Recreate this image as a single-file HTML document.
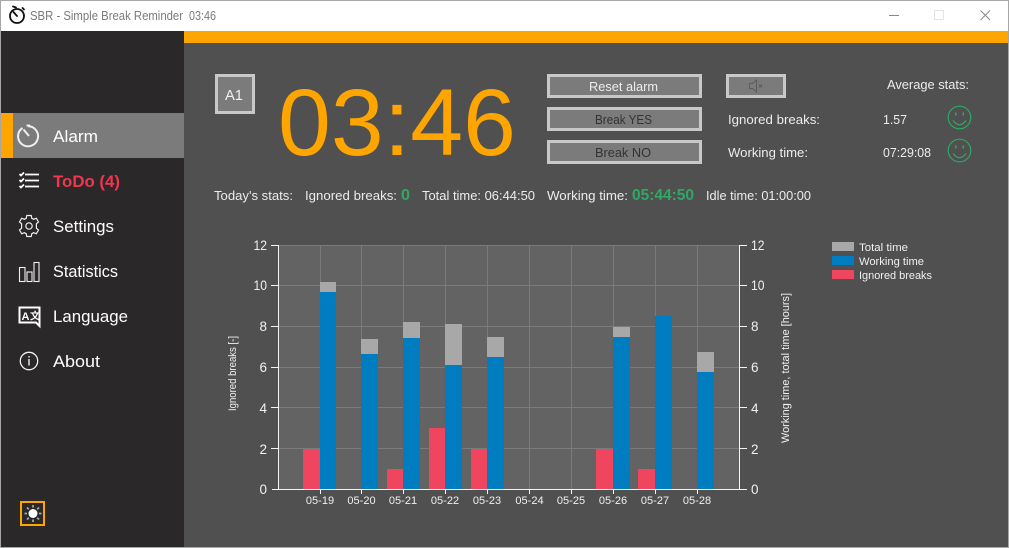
<!DOCTYPE html>
<html><head><meta charset="utf-8"><style>
html,body{margin:0;padding:0;background:#505050}
svg{display:block}
text{font-family:"Liberation Sans",sans-serif}
.n{font-size:17px;fill:#fff}
.s{font-size:13px;fill:#ececec}
.a{font-size:13.5px;fill:#f0f0f0}
.x{font-size:11px;fill:#f0f0f0}
.g{font-weight:bold;fill:#2fa866;font-size:16px}
</style></head><body>
<svg width="1009" height="548" viewBox="0 0 1009 548" xmlns="http://www.w3.org/2000/svg">
<rect width="1009" height="548" fill="#a6a6a6"/>
<rect x="1" y="1" width="1007" height="30" fill="#fff"/>
<rect x="1" y="31" width="183" height="516" fill="#2a2829"/>
<rect x="184" y="31" width="824" height="516" fill="#505050"/>
<rect x="184" y="31" width="824" height="12" fill="#ffa500"/>

<!-- title bar -->
<g fill="none" stroke="#111" stroke-width="1.8">
<circle cx="17" cy="16" r="7"/><path d="M13 6.5 L16 7.5M17 16 L13.5 12M22.5 8 L24 9.5" stroke-linecap="round"/>
</g>
<text x="30" y="20" font-size="12.5" fill="#7a7a7a" textLength="153" lengthAdjust="spacingAndGlyphs">SBR - Simple Break Reminder</text>
<text x="189" y="20" font-size="12.5" fill="#7a7a7a" textLength="27" lengthAdjust="spacingAndGlyphs">03:46</text>
<rect x="889" y="15" width="10" height="1" fill="#888"/>
<rect x="934.500" y="10.500" width="9" height="9" fill="none" stroke="#e4e4e4"/>
<path d="M980.500 10.500 L990 20M990 10.500 L980.500 20" stroke="#888" stroke-width="1"/>

<!-- sidebar -->
<rect x="1" y="113" width="183" height="45" fill="#7b7b7b"/>
<rect x="1" y="113" width="12" height="45" fill="#ffa500"/>
<g fill="none" stroke="#f0f0f0" stroke-width="2">
<path d="M22.500 128 A10 10 0 1 0 28 126.300"/><path d="M29 136 L23.500 129.500"/><path d="M26.500 125.500 L30 125.500" />
</g>
<g stroke="#fff" stroke-width="1.800" fill="none">
<path d="M25 174.500H39M25 180.500H39M25 186.500H39"/>
<path d="M19.500 174 L21 175.500 L24 172.500M19.500 180 L21 181.500 L24 178.500M19.500 186 L21 187.500 L24 184.500"/>
</g>
<g fill="none" stroke="#f0f0f0" stroke-width="1.200">
<circle cx="29" cy="226" r="3.200"/>
<path d="M26.800 215.500 L31.200 215.500 L31.800 218.300 L33.700 219.300 L36.300 218.200 L38.500 222 L36.400 223.800 L36.400 228.200 L38.500 230 L36.300 233.800 L33.700 232.700 L31.800 233.700 L31.200 236.500 L26.800 236.500 L26.200 233.700 L24.300 232.700 L21.700 233.800 L19.500 230 L21.600 228.200 L21.600 223.800 L19.500 222 L21.700 218.200 L24.300 219.300 L26.200 218.300 Z"/>
</g>
<g fill="none" stroke="#f0f0f0" stroke-width="1.100">
<rect x="19.500" y="267.500" width="5.500" height="14"/><rect x="27" y="272" width="5" height="9.500"/><rect x="34" y="262.500" width="5" height="19"/>
</g>
<path d="M19.500 307.500 H39.500 V326 L36 322.500 H19.500 Z" fill="none" stroke="#fff" stroke-width="2"/>
<text x="21.500" y="320" font-size="11" font-weight="bold" fill="#fff">A</text>
<text x="30" y="319.500" font-size="10" font-weight="bold" fill="#fff" style="font-family:'Liberation Sans','Noto Sans CJK SC',sans-serif">文</text>
<circle cx="29" cy="361" r="8.700" fill="none" stroke="#f0f0f0" stroke-width="1.300"/>
<rect x="28.300" y="359" width="1.400" height="6.500" fill="#f0f0f0"/><rect x="28.300" y="356" width="1.400" height="1.500" fill="#f0f0f0"/>

<text class="n" x="53" y="142" textLength="45" lengthAdjust="spacingAndGlyphs">Alarm</text>
<text x="53" y="187" font-size="17" font-weight="bold" fill="#f6344c" textLength="67" lengthAdjust="spacingAndGlyphs">ToDo (4)</text>
<text class="n" x="53" y="232" textLength="61" lengthAdjust="spacingAndGlyphs">Settings</text>
<text class="n" x="53" y="277" textLength="65" lengthAdjust="spacingAndGlyphs">Statistics</text>
<text class="n" x="53" y="322" textLength="75" lengthAdjust="spacingAndGlyphs">Language</text>
<text class="n" x="53" y="367" textLength="47" lengthAdjust="spacingAndGlyphs">About</text>

<rect x="21" y="502" width="23" height="23" fill="none" stroke="#ffa500" stroke-width="2"/>
<circle cx="33" cy="513.500" r="4.500" fill="#fff"/>
<path d="M33 505v2.500M33 519.500v2.500M24.500 513.500h2.500M39 513.500h2.500M27 507.500l1.800 1.800M37.200 517.700l1.800 1.800M39 507.500l-1.800 1.800M28.800 517.700l-1.800 1.800" stroke="#aaa" stroke-width="1.700"/>

<!-- A1 and time -->
<rect x="216.500" y="75.500" width="37" height="37" fill="#7b7b7b" stroke="#c8c8c8" stroke-width="3"/>
<text x="225" y="100" font-size="14.500" fill="#f0f0f0" textLength="18" lengthAdjust="spacingAndGlyphs">A1</text>
<text x="278" y="155" font-size="95" fill="#ffa500" textLength="238">03:46</text>

<!-- buttons -->
<g fill="#7b7b7b" stroke="#c8c8c8" stroke-width="3">
<rect x="548.500" y="75.500" width="152" height="21"/>
<rect x="548.500" y="108.500" width="152" height="21"/>
<rect x="548.500" y="141.500" width="152" height="21"/>
<rect x="727.500" y="75.500" width="57" height="21"/>
</g>
<text x="589" y="91" font-size="12.500" fill="#ededed" textLength="69" lengthAdjust="spacingAndGlyphs">Reset alarm</text>
<text x="595" y="124" font-size="12.500" fill="#333" textLength="57" lengthAdjust="spacingAndGlyphs">Break YES</text>
<text x="595" y="157" font-size="12.500" fill="#333" textLength="56" lengthAdjust="spacingAndGlyphs">Break NO</text>
<path d="M749.500 83.500h3l4-3.500v12l-4-3.500h-3zM759 84.500l3 3M762 84.500l-3 3" fill="none" stroke="#5c5c5c" stroke-width="1"/>

<!-- average stats -->
<text class="s" x="887" y="89" textLength="82" lengthAdjust="spacingAndGlyphs">Average stats:</text>
<text class="s" x="728" y="124" textLength="92" lengthAdjust="spacingAndGlyphs">Ignored breaks:</text>
<text class="s" x="883" y="124" textLength="24" lengthAdjust="spacingAndGlyphs">1.57</text>
<text class="s" x="728" y="157" textLength="80" lengthAdjust="spacingAndGlyphs">Working time:</text>
<text class="s" x="883" y="157" textLength="48" lengthAdjust="spacingAndGlyphs">07:29:08</text>
<g fill="none" stroke="#2fa866" stroke-width="1.200">
<circle cx="959.500" cy="117.500" r="11.300"/><path d="M953 120.500 Q959.500 129 966 120.500"/>
<circle cx="959.500" cy="150.500" r="11.300"/><path d="M953 153.500 Q959.500 162 966 153.500"/>
</g>
<g fill="#2fa866">
<rect x="955" y="112.500" width="1.500" height="3"/><rect x="962.500" y="112.500" width="1.500" height="3"/>
<rect x="955" y="145.500" width="1.500" height="3"/><rect x="962.500" y="145.500" width="1.500" height="3"/>
</g>

<!-- today -->
<text class="s" x="214" y="200" textLength="79" lengthAdjust="spacingAndGlyphs">Today's stats:</text>
<text class="s" x="305" y="200" textLength="92" lengthAdjust="spacingAndGlyphs">Ignored breaks:</text>
<text class="g" x="401" y="200" textLength="9" lengthAdjust="spacingAndGlyphs">0</text>
<text class="s" x="422" y="200" textLength="113" lengthAdjust="spacingAndGlyphs">Total time: 06:44:50</text>
<text class="s" x="547" y="200" textLength="81" lengthAdjust="spacingAndGlyphs">Working time:</text>
<text class="g" x="632" y="200" textLength="62" lengthAdjust="spacingAndGlyphs">05:44:50</text>
<text class="s" x="706" y="200" textLength="105" lengthAdjust="spacingAndGlyphs">Idle time: 01:00:00</text>

<!-- chart -->
<rect x="279" y="245" width="460" height="244" fill="#636363"/>
<g stroke="#7b7b7b" stroke-width="1">
<path d="M279 245.500H739M279 285.500H739M279 326.500H739M279 367.500H739M279 407.500H739M279 448.500H739"/>
<path d="M320.500 245V489M361.500 245V489M403.500 245V489M445.500 245V489M487.500 245V489M529.500 245V489M571.500 245V489M613.500 245V489M655.500 245V489M697.500 245V489"/>
</g>
<g fill="#a8a8a8">
<rect x="320" y="282" width="16" height="10"/>
<rect x="361" y="339" width="17" height="15"/>
<rect x="403" y="322" width="17" height="16"/>
<rect x="445" y="324" width="17" height="41"/>
<rect x="487" y="337" width="17" height="20"/>
<rect x="613" y="327" width="17" height="10"/>
<rect x="697" y="352" width="17" height="20"/>
</g>
<g fill="#007cc0">
<rect x="320" y="292" width="16" height="197"/>
<rect x="361" y="354" width="17" height="135"/>
<rect x="403" y="338" width="17" height="151"/>
<rect x="445" y="365" width="17" height="124"/>
<rect x="487" y="357" width="17" height="132"/>
<rect x="613" y="337" width="17" height="152"/>
<rect x="655" y="316" width="17" height="173"/>
<rect x="697" y="372" width="17" height="117"/>
</g>
<g fill="#f0455f">
<rect x="303" y="449" width="17" height="40"/>
<rect x="387" y="469" width="16" height="20"/>
<rect x="429" y="428" width="16" height="61"/>
<rect x="471" y="449" width="16" height="40"/>
<rect x="596" y="449" width="17" height="40"/>
<rect x="638" y="469" width="17" height="20"/>
</g>
<g stroke="#f4f4f4" stroke-width="1" fill="none">
<path d="M278.500 245V489.500M739.500 245V489.500M272 489.500H740"/>
<path d="M271 245.500h8M271 285.500h8M271 326.500h8M271 367.500h8M271 407.500h8M271 448.500h8"/>
<path d="M739 245.500h8M739 285.500h8M739 326.500h8M739 367.500h8M739 407.500h8M739 448.500h8M739 489.500h8"/>
<path d="M320.500 489v5M361.500 489v5M403.500 489v5M445.500 489v5M487.500 489v5M529.500 489v5M571.500 489v5M613.500 489v5M655.500 489v5M697.500 489v5"/>
</g>
<g text-anchor="end">
<text class="a" x="267" y="250" textLength="13.500" lengthAdjust="spacingAndGlyphs">12</text><text class="a" x="267" y="290" textLength="13.500" lengthAdjust="spacingAndGlyphs">10</text><text class="a" x="267" y="331">8</text><text class="a" x="267" y="372">6</text><text class="a" x="267" y="413">4</text><text class="a" x="267" y="454">2</text><text class="a" x="267" y="494">0</text>
</g>
<text class="a" x="751" y="250" textLength="13.500" lengthAdjust="spacingAndGlyphs">12</text><text class="a" x="751" y="290" textLength="13.500" lengthAdjust="spacingAndGlyphs">10</text><text class="a" x="751" y="331">8</text><text class="a" x="751" y="372">6</text><text class="a" x="751" y="413">4</text><text class="a" x="751" y="454">2</text><text class="a" x="751" y="494">0</text>
<g text-anchor="middle">
<text class="x" x="320" y="504">05-19</text><text class="x" x="361.500" y="504">05-20</text><text class="x" x="403" y="504">05-21</text><text class="x" x="445" y="504">05-22</text><text class="x" x="487" y="504">05-23</text><text class="x" x="529.500" y="504">05-24</text><text class="x" x="571" y="504">05-25</text><text class="x" x="613" y="504">05-26</text><text class="x" x="655" y="504">05-27</text><text class="x" x="697" y="504">05-28</text>
</g>
<text class="x" transform="translate(236 411) rotate(-90)" textLength="75" lengthAdjust="spacingAndGlyphs">Ignored breaks [-]</text>
<text class="x" transform="translate(789 443) rotate(-90)" textLength="150" lengthAdjust="spacingAndGlyphs">Working time, total time [hours]</text>
<rect x="832" y="242" width="22" height="9" fill="#a8a8a8"/>
<rect x="832" y="256" width="22" height="9" fill="#007cc0"/>
<rect x="832" y="270" width="22" height="9" fill="#f0455f"/>
<text class="x" x="859" y="251" textLength="49" lengthAdjust="spacingAndGlyphs">Total time</text>
<text class="x" x="859" y="265" textLength="65" lengthAdjust="spacingAndGlyphs">Working time</text>
<text class="x" x="859" y="279" textLength="73" lengthAdjust="spacingAndGlyphs">Ignored breaks</text>
</svg>
</body></html>
